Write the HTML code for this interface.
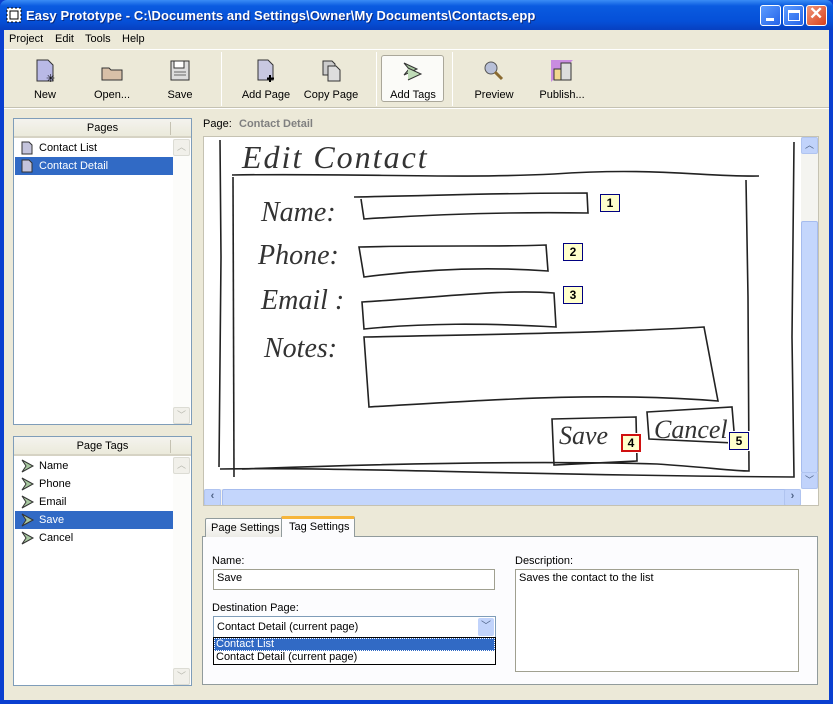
<!DOCTYPE html>
<html><head><meta charset="utf-8"><style>
*{box-sizing:border-box;margin:0;padding:0}
html{overflow:hidden;height:704px}
body{width:833px;height:704px;overflow:hidden;background:#0a3fd0;font-family:"Liberation Sans",Tahoma,sans-serif;font-size:11px;color:#000;position:relative}
.abs{position:absolute}
#title{left:0;top:0;width:833px;height:30px;background:linear-gradient(#3a8cf5,#0a5be0 20%,#0550d8 70%,#0740c0);border-radius:7px 7px 0 0}
#title .t{left:26px;top:8px;color:#fff;font-weight:bold;font-size:13px;letter-spacing:.1px;text-shadow:1px 1px #0a2a80}
.wb{top:5px;width:21px;height:21px;border:1px solid #fff;border-radius:3px;background:linear-gradient(135deg,#5d9cff,#2563e8)}
#client{left:4px;top:30px;width:825px;height:670px;background:#ece9d8;overflow:hidden}
#menu span{position:absolute;top:3px}
.tb{position:absolute;top:29px;text-align:center;font-size:11px;white-space:nowrap}
.tb svg{display:block;margin:0 auto 6px}
.sep{position:absolute;top:22px;width:1px;height:54px;background:#c5c2b2;border-right:1px solid #fff}
.panel{position:absolute;background:#fff;border:1px solid #7f9db9;overflow:hidden}
.ph{position:absolute;left:0;top:0;right:0;height:19px;background:linear-gradient(#f4f3ee,#ebeadb);border-bottom:2px solid #d6d3c4;text-align:center;line-height:18px}
.item{position:absolute;left:1px;width:158px;height:18px;line-height:18px;padding-left:24px}
.item.sel{background:#316ac5;color:#fff}
.item svg{position:absolute;left:6px;top:2px}
.vs{position:absolute;width:17px;background:#fcfcfa}
.sbtn{position:absolute;width:17px;height:17px;border:1px solid #dcdcd4;border-radius:2px;background:#f1f0ea;color:#b9b9b0;text-align:center;font-size:9px;line-height:15px}
.inp{position:absolute;background:#fff;border:1px solid #7f9db9;padding:2px 3px}
.tag{position:absolute;width:20px;height:18px;background:#ffffcc;border:1px solid #000080;font:bold 12px "Liberation Sans",sans-serif;text-align:center;line-height:16px;outline:1px solid #fff}
.hw{position:absolute;font:italic 28px "Liberation Serif",serif;color:#333;font-weight:normal}
</style></head><body>
<div id="title" class="abs">
 <svg class="abs" style="left:6px;top:7px" width="16" height="16"><rect x="1" y="1" width="14" height="14" fill="#fff" stroke="#000" stroke-dasharray="2,2"/><rect x="4" y="4" width="8" height="8" fill="none" stroke="#000"/></svg>
 <div class="t abs">Easy Prototype - C:\Documents and Settings\Owner\My Documents\Contacts.epp</div>
 <div class="wb abs" style="left:760px"><div class="abs" style="left:5px;top:12px;width:8px;height:3px;background:#fff"></div></div>
 <div class="wb abs" style="left:783px"><div class="abs" style="left:4px;top:4px;width:12px;height:11px;border:1px solid #fff;border-top:3px solid #fff"></div></div>
 <div class="wb abs" style="left:806px;background:linear-gradient(135deg,#f0967a,#d8411c)"><div class="abs" style="left:2px;top:-2px;color:#fff;font:bold 17px 'Liberation Sans'">✕</div></div>
</div>
<div id="client" class="abs">
 <div id="menu" class="abs" style="left:0;top:0;width:825px;height:18px">
  <span style="left:5px">Project</span><span style="left:51px">Edit</span><span style="left:81px">Tools</span><span style="left:118px">Help</span>
 </div>
 <div class="abs" style="left:0;top:19px;width:825px;height:1px;background:#fff"></div>
 <div class="tb" style="left:26px;width:30px"><svg width="22" height="24"><path d="M3 1h11l5 5v16H3z" fill="#b9b9e6" stroke="#333"/><text x="12" y="23" font-size="11">✳</text></svg>New</div>
 <div class="tb" style="left:88px;width:40px"><svg width="24" height="24"><path d="M2 9h7l2 2h11v10H2z" fill="#d8c0a8" stroke="#333"/></svg>Open...</div>
 <div class="tb" style="left:160px;width:32px"><svg width="22" height="24"><rect x="2" y="2" width="18" height="19" fill="#ddd" stroke="#333"/><rect x="5" y="2" width="10" height="7" fill="#fff" stroke="#333"/><path d="M5 13h12M5 16h12" stroke="#666"/></svg>Save</div>
 <div class="sep" style="left:217px"></div>
 <div class="tb" style="left:234px;width:56px"><svg width="22" height="24"><path d="M3 1h10l5 5v15H3z" fill="#c8c8e0" stroke="#333"/><path d="M15 16v7M12 19.5h7" stroke="#000" stroke-width="2"/></svg>Add Page</div>
 <div class="tb" style="left:298px;width:58px"><svg width="22" height="24"><path d="M3 2h9l3 3v11H3z" fill="#ccc" stroke="#333"/><path d="M8 7h8l4 4v11H8z" fill="#ddd" stroke="#333"/></svg>Copy Page</div>
 <div class="sep" style="left:372px"></div>
 <div class="abs" style="left:377px;top:25px;width:63px;height:47px;border:1px solid #aaa79a;border-radius:3px;background:#fbfbf8"></div>
 <div class="tb" style="left:380px;width:58px"><svg width="24" height="24"><path d="M3 4l13 6-13 6 5-6z" fill="#a8c8a0" stroke="#333"/><path d="M7 9l13 6-13 6" fill="#c0dcb8" stroke="#333"/></svg>Add Tags</div>
 <div class="sep" style="left:448px"></div>
 <div class="tb" style="left:468px;width:44px"><svg width="24" height="24"><circle cx="9" cy="9" r="6" fill="#b8c0d8" stroke="#555"/><path d="M13 13l7 7" stroke="#8a6a30" stroke-width="3"/></svg>Preview</div>
 <div class="tb" style="left:534px;width:48px"><svg width="24" height="24"><path d="M1 1h22l-22 22z" fill="#c98ce0"/><rect x="4" y="10" width="8" height="11" fill="#f0d890" stroke="#333"/><rect x="11" y="4" width="10" height="17" fill="#ddd" stroke="#333"/></svg>Publish...</div>
 <div class="abs" style="left:0;top:77px;width:825px;height:1px;background:#c5c2b2"></div>
 <div class="abs" style="left:0;top:78px;width:825px;height:1px;background:#fff"></div>

 <div class="panel" style="left:9px;top:88px;width:179px;height:307px">
  <div class="ph">Pages<div class="abs" style="left:156px;top:3px;width:1px;height:13px;background:#c5c2b2"></div></div>
  <div class="item" style="top:20px"><svg width="12" height="14"><path d="M1 1h7l3 3v9H1z" fill="#c4c4dc" stroke="#333"/></svg>Contact List</div>
  <div class="item sel" style="top:38px"><svg width="12" height="14"><path d="M1 1h7l3 3v9H1z" fill="#c4c4dc" stroke="#333"/></svg>Contact Detail</div>
  <div class="vs" style="left:159px;top:20px;height:285px"><div class="sbtn" style="top:0">︿</div><div class="sbtn" style="bottom:0">﹀</div></div>
 </div>
 <div class="panel" style="left:9px;top:406px;width:179px;height:250px">
  <div class="ph">Page Tags<div class="abs" style="left:156px;top:3px;width:1px;height:13px;background:#c5c2b2"></div></div>
  <div class="item" style="top:20px"><svg width="14" height="14"><path d="M1 1l11 6-11 6 4-6z" fill="#a8c8a0" stroke="#333"/></svg>Name</div>
  <div class="item" style="top:38px"><svg width="14" height="14"><path d="M1 1l11 6-11 6 4-6z" fill="#a8c8a0" stroke="#333"/></svg>Phone</div>
  <div class="item" style="top:56px"><svg width="14" height="14"><path d="M1 1l11 6-11 6 4-6z" fill="#a8c8a0" stroke="#333"/></svg>Email</div>
  <div class="item sel" style="top:74px"><svg width="14" height="14"><path d="M1 1l11 6-11 6 4-6z" fill="#a8c8a0" stroke="#333"/></svg>Save</div>
  <div class="item" style="top:92px"><svg width="14" height="14"><path d="M1 1l11 6-11 6 4-6z" fill="#a8c8a0" stroke="#333"/></svg>Cancel</div>
  <div class="vs" style="left:159px;top:20px;height:228px"><div class="sbtn" style="top:0">︿</div><div class="sbtn" style="bottom:0">﹀</div></div>
 </div>

 <div class="abs" style="left:199px;top:88px">Page:</div>
 <div class="abs" style="left:235px;top:88px;color:#808080;font-weight:bold">Contact Detail</div>

 <div class="abs" style="left:199px;top:106px;width:616px;height:370px;background:#fff;border:1px solid #c5c2b2;overflow:hidden">
  <svg class="abs" style="left:0;top:0" width="597" height="352" fill="none" stroke="#222" stroke-width="1.6">
   <path d="M16 3 L17 120 L15 330 M16 332 C150 330 300 338 590 340 L588 200 L590 5"/>
   <path d="M28 38 C150 36 250 42 350 37 C450 30 500 40 555 39"/>
   <path d="M29 40 L30 340"/><path d="M38 332 C200 326 350 324 453 327 C500 330 530 334 545 334 L544 160 L542 43"/>
   <path d="M150 60 C250 58 300 56 383 56 L384 76 C320 75 250 76 160 82 L157 62"/>
   <path d="M155 110 C230 108 300 110 342 108 L344 134 C290 130 230 131 160 140 Z"/>
   <path d="M158 165 C240 160 300 152 350 156 L352 190 C280 186 220 186 160 192 Z"/>
   <path d="M160 200 C260 198 400 196 500 190 L514 264 C400 255 300 262 165 270 Z"/>
   <path d="M348 282 L432 280 L433 324 L350 328 Z"/>
   <path d="M443 275 L528 270 L531 306 L445 302 Z"/>
  </svg>
  <div class="hw" style="left:38px;top:2px;font-size:32px;letter-spacing:2px">Edit Contact</div>
  <div class="hw" style="left:57px;top:60px">Name:</div>
  <div class="hw" style="left:54px;top:103px">Phone:</div>
  <div class="hw" style="left:57px;top:148px">Email :</div>
  <div class="hw" style="left:60px;top:196px">Notes:</div>
  <div class="hw" style="left:355px;top:284px;font-size:26px">Save</div>
  <div class="hw" style="left:450px;top:278px;font-size:26px">Cancel</div>
  <div class="tag" style="left:396px;top:57px">1</div>
  <div class="tag" style="left:359px;top:106px">2</div>
  <div class="tag" style="left:359px;top:149px">3</div>
  <div class="tag" style="left:417px;top:297px;border:2px solid #d01010;line-height:14px">4</div>
  <div class="tag" style="left:525px;top:295px">5</div>
  <div class="abs" style="left:597px;top:0;width:17px;height:352px;background:#f4f4f0">
   <div class="abs" style="left:0;top:0;width:17px;height:17px;background:#c1d3fb;border:1px solid #b0c4f0;border-radius:2px;color:#4d6185;text-align:center;font-size:9px">︿</div>
   <div class="abs" style="left:0;top:84px;width:17px;height:252px;background:#c4d6fc;border:1px solid #a6bcee;border-radius:2px"></div>
   <div class="abs" style="left:0;bottom:0;width:17px;height:17px;background:#c1d3fb;border:1px solid #b0c4f0;border-radius:2px;color:#4d6185;text-align:center;font-size:9px">﹀</div>
  </div>
  <div class="abs" style="left:0;top:352px;width:597px;height:17px;background:#f4f4f0">
   <div class="abs" style="left:0;top:0;width:17px;height:17px;background:#c1d3fb;border:1px solid #b0c4f0;border-radius:2px;color:#4d6185;font-weight:bold;text-align:center">‹</div>
   <div class="abs" style="left:18px;top:0;width:566px;height:17px;background:#c4d6fc;border:1px solid #a6bcee;border-radius:2px"></div>
   <div class="abs" style="left:580px;top:0;width:17px;height:17px;background:#c1d3fb;border:1px solid #b0c4f0;border-radius:2px;color:#4d6185;font-weight:bold;text-align:center">›</div>
  </div>
 </div>

 <div class="abs" style="left:198px;top:506px;width:616px;height:149px;background:#fcfcfe;border:1px solid #919b9c"></div>
 <div class="abs" style="left:201px;top:488px;width:80px;height:19px;border:1px solid #919b9c;border-bottom:none;background:linear-gradient(#fff,#ecebe6);border-radius:2px 2px 0 0;padding:3px 0 0 5px">Page Settings</div>
 <div class="abs" style="left:277px;top:486px;width:74px;height:21px;border:1px solid #919b9c;border-bottom:none;border-top:3px solid #f6b53a;background:#fcfcfe;border-radius:2px 2px 0 0;padding:2px 0 0 7px">Tag Settings</div>
 <div class="abs" style="left:208px;top:525px">Name:</div>
 <div class="inp" style="left:209px;top:539px;width:282px;height:21px;border-color:#a0a090">Save</div>
 <div class="abs" style="left:208px;top:572px">Destination Page:</div>
 <div class="inp" style="left:209px;top:586px;width:283px;height:22px;padding:4px 3px">Contact Detail (current page)
  <div class="abs" style="right:1px;top:1px;width:16px;height:18px;background:#c1d3fb;border-radius:2px;color:#4d6185;text-align:center;font-size:10px;line-height:18px">﹀</div></div>
 <div class="abs" style="left:209px;top:607px;width:283px;height:28px;background:#fff;border:1px solid #000">
  <div style="background:#316ac5;color:#fff;height:13px;line-height:13px;padding-left:2px;outline:1px dotted #fff;outline-offset:-1px">Contact List</div>
  <div style="height:13px;line-height:13px;padding-left:2px">Contact Detail (current page)</div>
 </div>
 <div class="abs" style="left:511px;top:525px">Description:</div>
 <div class="inp" style="left:511px;top:539px;width:284px;height:103px;border-color:#a0a090">Saves the contact to the list</div>
</div>
</body></html>
